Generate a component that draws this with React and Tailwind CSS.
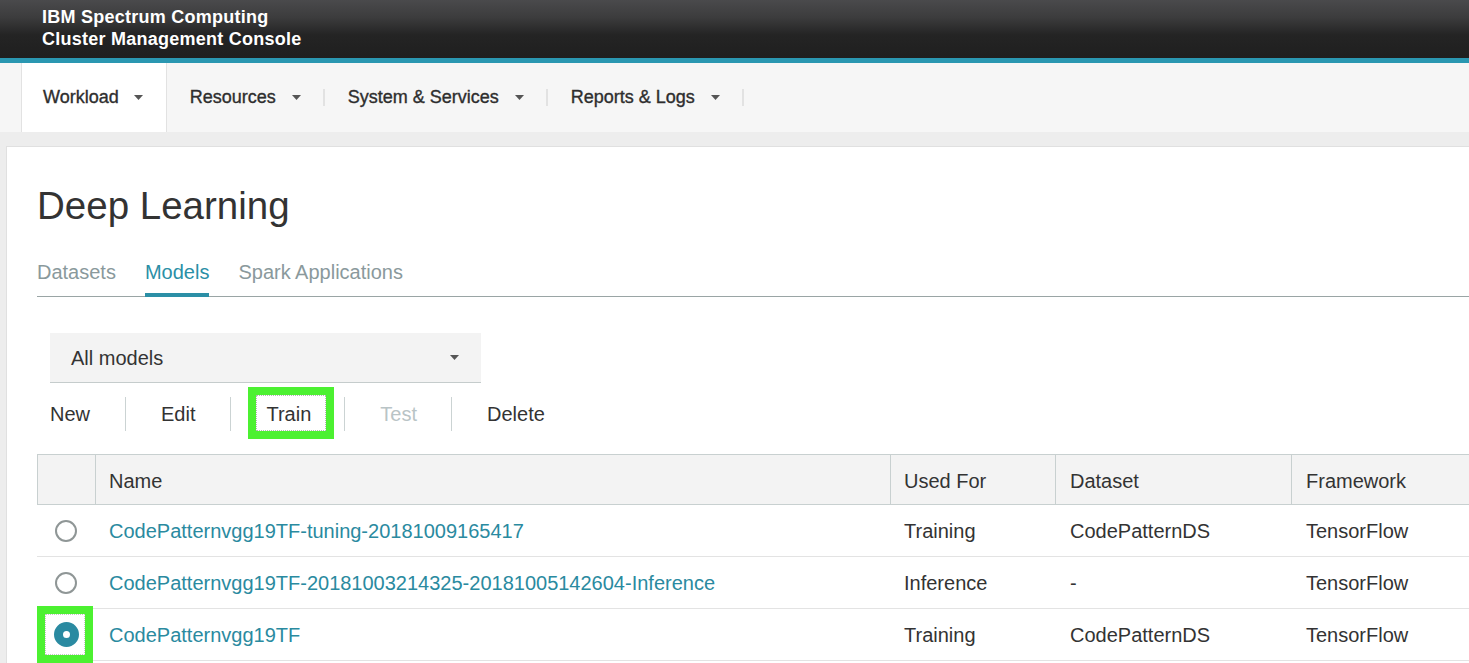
import React from 'react';

const FONT = "font-['Liberation_Sans',Arial,sans-serif]";

const NAV_ITEMS = ['Resources', 'System & Services', 'Reports & Logs'];
const TOOLBAR = [
  { label: 'New', pad: 'pr-[35px]' },
  { label: 'Edit', pad: 'px-[35px]' },
  { label: 'Train', pad: 'pl-[35px] pr-[33px]', marked: true },
  { label: 'Test', pad: 'pl-[35px] pr-[34px]', disabled: true },
  { label: 'Delete', pad: 'px-[35px]' },
];
const MODELS = [
  { name: 'CodePatternvgg19TF-tuning-20181009165417', usedFor: 'Training', dataset: 'CodePatternDS', framework: 'TensorFlow' },
  { name: 'CodePatternvgg19TF-20181003214325-20181005142604-Inference', usedFor: 'Inference', dataset: '-', framework: 'TensorFlow' },
  { name: 'CodePatternvgg19TF', usedFor: 'Training', dataset: 'CodePatternDS', framework: 'TensorFlow', selected: true },
];

function Caret({ className = '' }) {
  return (
    <svg className={className} width="9" height="5" viewBox="0 0 9 5">
      <path d="M0 0h9L4.5 5z" fill="#555" />
    </svg>
  );
}

export default function App() {
  return (
    <div className={`${FONT} w-full h-[663px] overflow-hidden bg-[#ededed] text-[#333]`}>
      {/* Masthead */}
      <header className="h-[58px] bg-[linear-gradient(to_bottom,#4a4a4c_0%,#3c3c3d_30%,#242424_60%,#1f1f1f_100%)] pl-[42px] pt-[6px]">
        <div className="text-white font-bold text-[18px] leading-[22px] tracking-[0.25px]">IBM Spectrum Computing</div>
        <div className="text-white font-bold text-[18px] leading-[22px] tracking-[0.25px]">Cluster Management Console</div>
      </header>
      <div className="h-[5px] bg-[#2a97b1]" />

      {/* Top nav */}
      <nav className="h-[69px] bg-[#f6f6f6] flex items-stretch pl-[21px] text-[18px] text-[#2e2e2e] [-webkit-text-stroke:0.35px_#2e2e2e]">
        <div className="flex items-center bg-white border-x border-[#e2e2e2] pl-[21px] pr-[23px]">
          <span>Workload</span>
          <Caret className="ml-[15px]" />
        </div>
        {NAV_ITEMS.map((item) => (
          <div key={item} className="flex items-center pl-[23px]">
            <span>{item}</span>
            <Caret className="ml-[16px]" />
            <div className="ml-[22px] w-[2px] h-[17px] bg-[#e2e2e2]" />
          </div>
        ))}
      </nav>

      {/* Main card */}
      <main className="mt-[14px] ml-[6px] mr-[-40px] bg-white border border-[#e0e0e0] pl-[30px] pt-[40px] h-[600px]">
        <h1 className="text-[38.5px] leading-[38px] text-[#333]">Deep Learning</h1>

        <div className="mt-[35px] flex gap-[29px] border-b border-[#9aa5a5] text-[20px] leading-[24px]">
          <span className="pb-[9px] border-b-4 border-transparent -mb-px text-[#8a999c]">Datasets</span>
          <span className="pb-[9px] border-b-4 border-[#2b8fa6] -mb-px text-[#2b8fa6]">Models</span>
          <span className="pb-[9px] border-b-4 border-transparent -mb-px text-[#8a999c]">Spark Applications</span>
        </div>

        <div className="ml-[13px]">
          <div className="mt-[36px] w-[431px] h-[50px] bg-[#f3f3f3] border-b border-[#c5cccc] flex items-center justify-between pl-[21px] pr-[22px]">
            <span className="text-[20px] text-[#333]">All models</span>
            <Caret />
          </div>

          <div className="mt-[14px] flex items-stretch h-[34px] text-[20px]">
            {TOOLBAR.map((t, i) => (
              <React.Fragment key={t.label}>
                {i > 0 && <div className="w-px bg-[#cbd3d3]" />}
                <div className={`relative flex items-center ${t.pad}`}>
                  <span className={t.disabled ? 'text-[#b9c4c6]' : 'text-[#333]'}>{t.label}</span>
                  {t.marked && (
                    <div className="absolute left-[17px] top-[-10px] w-[86px] h-[52px] border-[8px] border-[#4cf131]">
                      <div className="w-full h-full border border-dotted border-[#b5b5b5]" />
                    </div>
                  )}
                </div>
              </React.Fragment>
            ))}
          </div>
        </div>

        {/* Models table */}
        <div className="mt-[23px] text-[20px]">
          <div className="grid grid-cols-[58px_795px_165px_236px_400px] h-[51px] bg-[#f3f3f3] border-y border-l border-[#c8d0d0]">
            <div className="border-r border-[#c8d0d0]" />
            <div className="border-r border-[#c8d0d0] flex items-center pl-[13px] pt-[2px]">Name</div>
            <div className="border-r border-[#c8d0d0] flex items-center pl-[13px] pt-[2px]">Used For</div>
            <div className="border-r border-[#c8d0d0] flex items-center pl-[14px] pt-[2px]">Dataset</div>
            <div className="flex items-center pl-[14px] pt-[2px]">Framework</div>
          </div>
          {MODELS.map((m) => (
            <div key={m.name} className="grid grid-cols-[58px_795px_165px_236px_400px] h-[52px] border-b border-[#e3e3e3]">
              <div className="relative flex items-center justify-center">
                {m.selected ? (
                  <div className="w-[25px] h-[25px] rounded-full border-[9px] border-[#2a8aa1] bg-white" />
                ) : (
                  <div className="w-[22px] h-[22px] rounded-full border-[2.5px] border-[#8f9696]" />
                )}
                {m.selected && (
                  <div className="absolute left-0 top-[-3px] w-[56px] h-[57px] border-[8px] border-[#4cf131]">
                    <div className="w-full h-full border border-dotted border-[#c5c5c5]" />
                  </div>
                )}
              </div>
              <div className="flex items-center pl-[14px] text-[#2a8aa0]">{m.name}</div>
              <div className="flex items-center pl-[14px]">{m.usedFor}</div>
              <div className="flex items-center pl-[15px]">{m.dataset}</div>
              <div className="flex items-center pl-[15px]">{m.framework}</div>
            </div>
          ))}
        </div>
      </main>
    </div>
  );
}
